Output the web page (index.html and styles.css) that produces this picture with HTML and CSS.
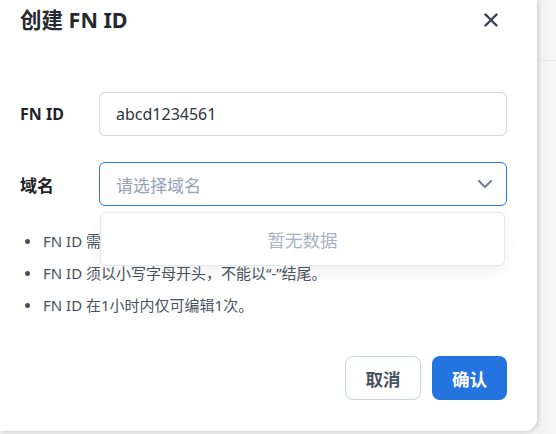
FILE: index.html
```html
<!DOCTYPE html>
<html lang="zh-CN">
<head>
<meta charset="utf-8">
<title>创建 FN ID</title>
<link rel="stylesheet" href="styles.css">
</head>
<body>
<div class="page">
  <div class="dialog">
    <div class="header">
      <h1 class="title">创建 FN ID</h1>
      <button class="close" aria-label="关闭">
        <svg width="14" height="14" viewBox="0 0 14 14"><path d="M1.5 1.5 L12.5 12.5 M12.5 1.5 L1.5 12.5" stroke="#374151" stroke-width="2.4" stroke-linecap="round"/></svg>
      </button>
    </div>
    <div class="body">
      <div class="row">
        <label class="label">FN ID</label>
        <div class="input">abcd1234561</div>
      </div>
      <div class="row row-select">
        <label class="label label-cjk">域名</label>
        <div class="select">
          <span class="placeholder">请选择域名</span>
          <svg class="chevron" width="16" height="10" viewBox="0 0 16 10"><path d="M2 2 L8 8 L14 2" fill="none" stroke="#718096" stroke-width="2.2" stroke-linecap="round" stroke-linejoin="round"/></svg>
        </div>
        <div class="dropdown">暂无数据</div>
      </div>
      <ul class="notes">
        <li>FN ID 需由6-20位小写字母、数字或“-”组成。</li>
        <li>FN ID 须以小写字母开头，不能以“-”结尾。</li>
        <li>FN ID 在1小时内仅可编辑1次。</li>
      </ul>
    </div>
    <div class="footer">
      <button class="btn btn-cancel">取消</button>
      <button class="btn btn-ok">确认</button>
    </div>
  </div>
  <div class="side">
    <div class="side-top"></div>
  </div>
</div>
</body>
</html>
```
FILE: styles.css
```css
* { box-sizing: border-box; }
html, body { margin: 0; padding: 0; }
body {
  width: 556px;
  height: 434px;
  overflow: hidden;
  background: #f4f4f5;
  font-family: "Noto Sans", "Noto Sans CJK SC", sans-serif;
}
.page {
  display: flex;
  height: 434px;
}
.dialog {
  width: 537px;
  height: 431px;
  flex: none;
  background: #ffffff;
  border-radius: 0 0 12px 0;
  box-shadow: 1px 1px 4px rgba(0, 0, 0, 0.18);
  padding: 0 30px 0 20px;
  display: flex;
  flex-direction: column;
  position: relative;
  z-index: 1;
}
.side {
  flex: 1;
  background: linear-gradient(to right, #f0f0f1, #f7f7f8);
}
.side-top {
  height: 61px;
  border-bottom: 1px solid #e8e8ea;
}
.header {
  height: 36px;
  display: flex;
  align-items: center;
  justify-content: space-between;
}
.title {
  margin: 0;
  font-size: 21.5px;
  font-weight: 700;
  color: #262a30;
  letter-spacing: 0;
}
.close {
  border: 0;
  background: none;
  padding: 0;
  margin-right: 9px;
  margin-top: 4px;
  width: 14px;
  height: 14px;
  display: flex;
}
.body {
  margin-top: 56px;
  position: relative;
}
.row {
  display: flex;
  align-items: center;
  height: 44px;
  margin-bottom: 26px;
}
.row-select { position: relative; margin-bottom: 0; }
.label {
  width: 79px;
  flex: none;
  font-size: 16px;
  font-weight: 700;
  color: #1f2328;
}
.label-cjk { font-size: 17px; }
.input, .select {
  flex: 1;
  height: 44px;
  border: 1px solid #cfd8e3;
  border-radius: 6px;
  padding: 0 16px;
  display: flex;
  align-items: center;
  font-size: 16px;
  color: #2d3340;
}
.select {
  border-color: #2a78e0;
  justify-content: space-between;
  padding-right: 13px;
}
.placeholder { color: #94a3b8; font-size: 17px; }
.dropdown {
  position: absolute;
  left: 80px;
  right: 2px;
  top: 50px;
  height: 54px;
  background: #ffffff;
  border: 1px solid #e3e7ee;
  border-radius: 6px;
  box-shadow: 0 6px 16px rgba(0, 0, 0, 0.06);
  display: flex;
  align-items: center;
  justify-content: center;
  font-size: 17.5px;
  color: #a6b2c3;
  z-index: 2;
}
.notes {
  list-style: none;
  margin: 19px 0 0 0;
  padding: 0;
}
.notes li {
  position: relative;
  height: 32px;
  line-height: 32px;
  padding-left: 23px;
  font-size: 15px;
  color: #4a5260;
  white-space: nowrap;
}
.notes li::before {
  content: "";
  position: absolute;
  left: 5px;
  top: 14px;
  width: 5px;
  height: 5px;
  border-radius: 50%;
  background: #4a5260;
}
.footer {
  margin-top: auto;
  margin-bottom: 31px;
  display: flex;
  justify-content: flex-end;
  gap: 11px;
}
.btn {
  height: 44px;
  border-radius: 8px;
  font-family: "Noto Sans", "Noto Sans CJK SC", sans-serif;
  font-size: 17.5px;
  font-weight: 700;
  padding: 0;
  cursor: pointer;
}
.btn-cancel {
  width: 76px;
  background: #ffffff;
  border: 1px solid #cbd5e1;
  color: #4a5260;
}
.btn-ok {
  width: 75px;
  background: #2474e0;
  border: 0;
  color: #ffffff;
}
```
